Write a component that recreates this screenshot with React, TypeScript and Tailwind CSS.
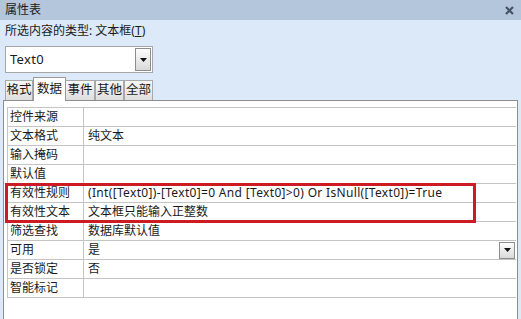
import React from "react";

const font = { fontFamily: '"Noto Sans", "Noto Sans CJK SC", sans-serif' };

function Arrow() {
  return (
    <svg width="7" height="4" viewBox="0 0 7 4">
      <path d="M0 0 H7 L3.5 4 Z" fill="#111" />
    </svg>
  );
}

function DropBtn({ cls }: { cls: string }) {
  return (
    <div
      className={
        "flex items-center justify-center border border-[#8d8d8d] bg-gradient-to-b from-[#fdfdfd] to-[#d9d9d9] " +
        cls
      }
    >
      <Arrow />
    </div>
  );
}

const rows: [string, string, boolean?, boolean?][] = [
  ["控件来源", ""],
  ["文本格式", "纯文本"],
  ["输入掩码", ""],
  ["默认值", ""],
  ["有效性规则", "(Int([Text0])-[Text0]=0 And [Text0]>0) Or IsNull([Text0])=True", false, true],
  ["有效性文本", "文本框只能输入正整数"],
  ["筛选查找", "数据库默认值"],
  ["可用", "是", true],
  ["是否锁定", "否"],
  ["智能标记", ""],
];

export default function App() {
  const tabs = ["格式", "数据", "事件", "其他", "全部"];
  return (
    <div
      className="w-[521px] h-[319px] bg-[#dce9f9] flex flex-col overflow-hidden text-[12px] text-[#1a1a1a] relative"
      style={font}
    >
      <div className="h-[20px] bg-[#b4c6dc] flex items-center justify-between pl-[5px] pr-[7px] shrink-0">
        <span className="leading-none">属性表</span>
        <svg width="9" height="9" viewBox="0 0 9 9">
          <path d="M1 1 L8 8 M8 1 L1 8" stroke="#465364" strokeWidth="2.2" />
        </svg>
      </div>
      <div className="h-[22px] flex items-center pl-[5px] shrink-0">
        所选内容的类型: 文本框(<span className="underline">T</span>)
      </div>
      <div className="ml-[5px] mt-[4px] w-[148px] h-[27px] bg-white border border-[#a6a6a6] flex items-center justify-between pl-[4px] pr-[1px] shrink-0">
        <span className="text-[13px] tracking-[0.3px]">Text0</span>
        <DropBtn cls="w-[16px] h-[23px]" />
      </div>
      <div className="flex items-end ml-[5px] mt-[4px] h-[23px] shrink-0 relative z-10">
        {tabs.map((t, i) =>
          i === 1 ? (
            <div
              key={t}
              className="w-[33px] h-[24px] -mb-[1px] bg-white border border-b-0 border-[#9a9a9a] flex items-center justify-center text-[12.5px]"
            >
              {t}
            </div>
          ) : (
            <div
              key={t}
              className={
                "h-[20px] bg-gradient-to-b from-[#f7f7f7] to-[#dedede] border border-b-0 border-[#a8a8a8] flex items-center justify-center text-[12.5px] " +
                (i === 0 ? "w-[28px]" : "w-[29px]") +
                (i === 2 ? " border-l-0" : "")
              }
            >
              {t}
            </div>
          )
        )}
      </div>
      <div className="ml-[3px] w-[515px] flex-1 bg-white border border-b-0 border-[#8f8f8f] pt-[6px] pl-[3px] pr-[1px]">
        <div className="border-t border-l border-[#c4c4c4]">
          {rows.map(([k, v, dd, latin]) => (
            <div key={k} className="flex h-[19px] border-b border-[#c4c4c4]">
              <div className="w-[76px] shrink-0 border-r border-[#c4c4c4] pl-[2px] flex items-center leading-none">
                {k}
              </div>
              <div className="flex-1 flex items-center justify-between pl-[4px] leading-none whitespace-nowrap">
                <span className={latin ? "tracking-[0.33px]" : ""}>{v}</span>
                {dd ? <DropBtn cls="w-[16px] h-[17px] mr-[1px]" /> : null}
              </div>
            </div>
          ))}
        </div>
      </div>
      <div className="absolute left-[5px] top-[183px] w-[471px] h-[40px] border-[3px] border-[#cc1b22] pointer-events-none" />
    </div>
  );
}
